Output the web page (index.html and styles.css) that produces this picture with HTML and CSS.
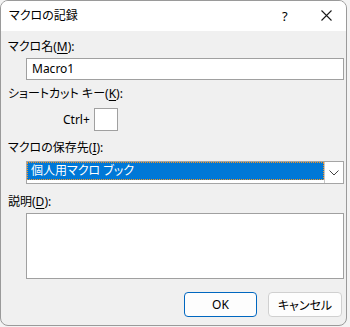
FILE: index.html
```html
<!DOCTYPE html>
<html lang="ja">
<head>
<meta charset="utf-8">
<title>マクロの記録</title>
<link rel="stylesheet" href="styles.css">
</head>
<body>
<div class="window">
  <div class="titlebar">
    <span class="title">マクロの記録</span>
    <span class="help">?</span>
    <span class="close"><svg width="11" height="11" viewBox="0 0 11 11"><path d="M0.5 0.5 L10.5 10.5 M10.5 0.5 L0.5 10.5" stroke="#1a1a1a" stroke-width="1.1" fill="none"/></svg></span>
  </div>
  <div class="content">
    <div class="label l1">マクロ名(<u>M</u>):</div>
    <div class="field input">Macro1</div>
    <div class="label l2">ショートカット キー(<u>K</u>):</div>
    <div class="ctrl-row"><span class="ctrl">Ctrl+</span><span class="keybox"></span></div>
    <div class="label l3">マクロの保存先(<u>I</u>):</div>
    <div class="combo">
      <div class="sel"><span>個人用マクロ ブック</span></div>
      <div class="drop"><svg width="10" height="6" viewBox="0 0 10 6"><path d="M0.5 0.5 L5 5 L9.5 0.5" stroke="#444" stroke-width="1" fill="none"/></svg></div>
    </div>
    <div class="label l4">説明(<u>D</u>):</div>
    <div class="field area"></div>
    <div class="buttons">
      <div class="btn ok">OK</div>
      <div class="btn cancel">キャンセル</div>
    </div>
  </div>
</div>
</body>
</html>
```
FILE: styles.css
```css
html, body {
  margin: 0;
  padding: 0;
  background: #f3f3f3;
}
body {
  width: 350px;
  height: 327px;
  overflow: hidden;
  font-family: "Noto Sans", "Noto Sans CJK JP", sans-serif;
  font-size: 12px;
  color: #000;
  font-feature-settings: "palt";
}
.window {
  width: 347px;
  height: 326px;
  box-sizing: border-box;
  border: 1px solid #9a9a9a;
  border-radius: 8px;
  overflow: hidden;
  background: #f0f0f0;
  display: flex;
  flex-direction: column;
}
.titlebar {
  height: 30px;
  background: #fff;
  display: flex;
  align-items: center;
  position: relative;
}
.title {
  margin-left: 8px;
  font-size: 12px;
  line-height: 16px;
}
.help {
  position: absolute;
  left: 281px;
  top: 7px;
  font-size: 13px;
  line-height: 16px;
}
.close {
  position: absolute;
  left: 320px;
  top: 9px;
  width: 11px;
  height: 11px;
  display: block;
}
.close svg { display: block; }
.content {
  padding: 0 3px 0 7px;
  display: flex;
  flex-direction: column;
}
.label {
  line-height: 16px;
  height: 16px;
}
.label u { text-underline-offset: 2px; }
.l1 { margin-top: 8px; }
.l2 { margin-top: 6px; }
.l3 { margin-top: 9px; }
.l4 { margin-top: 10px; }
.field {
  margin-left: 18px;
  width: 318px;
  box-sizing: border-box;
  background: #fff;
  border: 1px solid #a0a0a0;
}
.input {
  margin-top: 3px;
  height: 22px;
  line-height: 20px;
  padding-left: 5px;
}
.ctrl-row {
  margin-top: 6px;
  margin-left: 55px;
  display: flex;
  align-items: center;
  gap: 4px;
  height: 23px;
}
.ctrl { line-height: 16px; }
.keybox {
  width: 24px;
  height: 23px;
  box-sizing: border-box;
  background: #fff;
  border: 1px solid #a0a0a0;
}
.combo {
  margin-top: 5px;
  margin-left: 18px;
  width: 318px;
  height: 23px;
  box-sizing: border-box;
  border: 1px solid #a5a5a5;
  background: #fff;
  display: flex;
}
.sel {
  flex: 1;
  margin: 0 0 3px 0;
  background: #0078d7;
  color: #fff;
  border: 1px dotted #f7941d;
  box-sizing: border-box;
  line-height: 16px;
  padding-left: 3px;
}
.drop {
  width: 18px;
  border-left: 1px solid #c8c8c8;
  display: flex;
  align-items: center;
  justify-content: center;
  background: #fff;
}
.drop svg { display: block; }
.area {
  margin-top: 3px;
  height: 66px;
}
.buttons {
  margin-top: 13px;
  display: flex;
  justify-content: flex-end;
  gap: 11px;
  padding-right: 1px;
}
.btn {
  height: 25px;
  box-sizing: border-box;
  border-radius: 4px;
  display: flex;
  align-items: center;
  justify-content: center;
  background: #fdfdfd;
}
.ok {
  width: 73px;
  border: 1px solid #0067c0;
}
.cancel {
  width: 74px;
  border: 1px solid #d0d0d0;
}
```
